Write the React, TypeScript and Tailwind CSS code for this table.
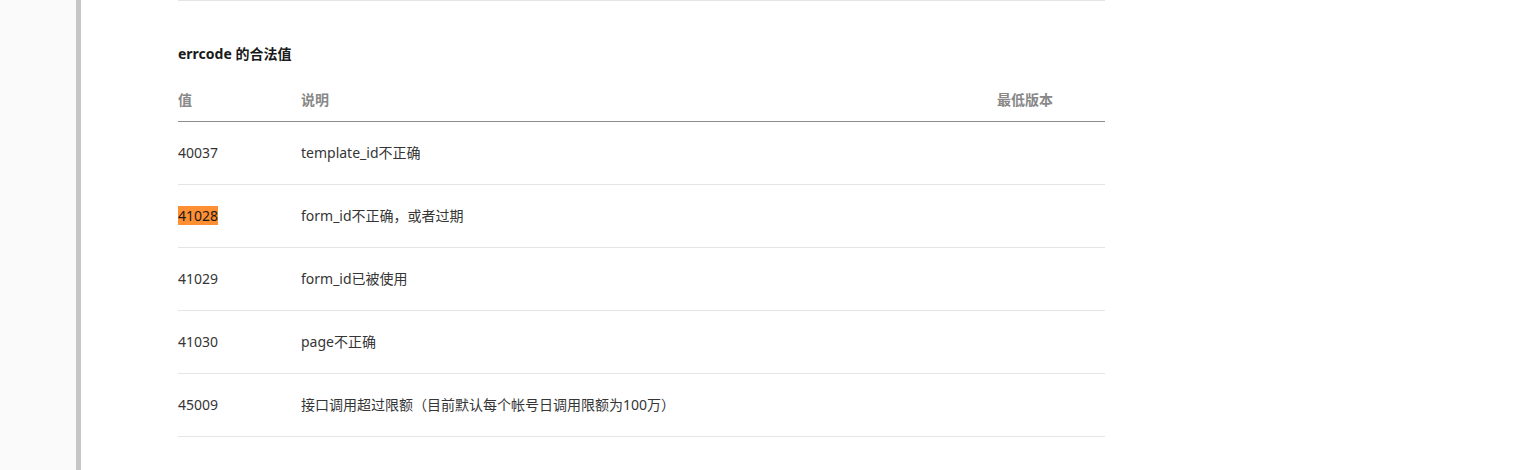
const rows: { code: string; desc: string; mark?: boolean }[] = [
  { code: '40037', desc: 'template_id不正确' },
  { code: '41028', desc: 'form_id不正确，或者过期', mark: true },
  { code: '41029', desc: 'form_id已被使用' },
  { code: '41030', desc: 'page不正确' },
  { code: '45009', desc: '接口调用超过限额（目前默认每个帐号日调用限额为100万）' },
];

export default function App() {
  return (
    <div
      className="flex h-[470px] w-full bg-white text-[14px] text-[#353535]"
      style={{ fontFamily: '"Noto Sans", "Noto Sans CJK SC", sans-serif' }}
    >
      {/* sidebar edge */}
      <div className="w-[76px] shrink-0 bg-[#fafafa]"></div>
      <div className="w-[5px] shrink-0 bg-[#c6c6c6]"></div>

      {/* content */}
      <div className="pl-[97px]">
        <div className="w-[927px] border-t border-[#e5e5e5]">
          <h4 className="mt-[43px] text-[14px] font-bold leading-5 text-[#1a1a1a]">errcode 的合法值</h4>

          <table className="mt-[15px] w-full border-collapse text-left">
            <thead>
              <tr className="border-b border-[#8c8c8c]">
                <th className="w-[123px] py-[11px] font-bold leading-5 text-[#888]">值</th>
                <th className="py-[11px] font-bold leading-5 text-[#888]">说明</th>
                <th className="w-[108px] py-[11px] font-bold leading-5 text-[#888]">最低版本</th>
              </tr>
            </thead>
            <tbody>
              {rows.map((r) => (
                <tr key={r.code} className="border-b border-[#e5e5e5]">
                  <td className="py-[21px] leading-5">
                    {r.mark ? <span className="bg-[#ff8f33] text-[#1a1a1a]">{r.code}</span> : r.code}
                  </td>
                  <td className="py-[21px] leading-5">{r.desc}</td>
                  <td className="py-[21px] leading-5"></td>
                </tr>
              ))}
            </tbody>
          </table>
        </div>
      </div>
    </div>
  );
}
